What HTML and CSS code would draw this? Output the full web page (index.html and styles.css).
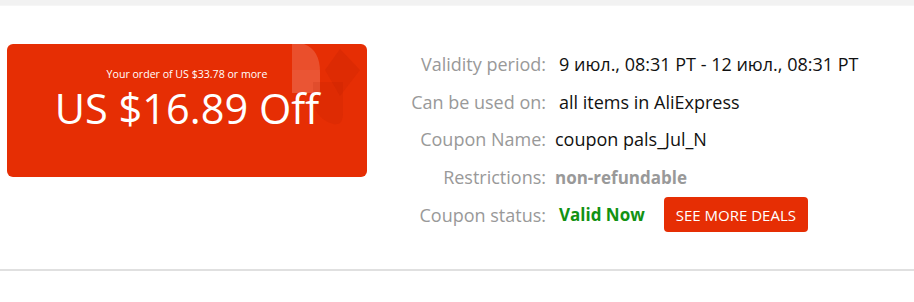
FILE: index.html
```html
<!DOCTYPE html>
<html lang="en">
<head>
<meta charset="utf-8">
<link rel="stylesheet" href="styles.css">
</head>
<body>
<div class="topbar"></div>
<section class="coupon-section">
  <div class="coupon-card">
    <svg class="card-deco" width="360" height="133" viewBox="0 0 360 133" aria-hidden="true">
      <path d="M285 0 H297 Q313 6 313 28 V49 H285 Z" fill="#ffffff" fill-opacity="0.16"/>
      <path d="M285 26 H313 V49 H285 Z" fill="#ffffff" fill-opacity="0.04"/>
      <path d="M333 5 L318 26 L353 26 Z" fill="#a81800" fill-opacity="0.16"/>
      <path d="M318 26 H353 L333 52 Z" fill="#a81800" fill-opacity="0.12"/>
      <path d="M306 38 H336 V70 Q336 82 326 80 Q306 74 306 52 Z" fill="#a81800" fill-opacity="0.12"/>
    </svg>
    <div class="card-cond">Your order of US $33.78 or more</div>
    <div class="card-amount">US $16.89 Off</div>
  </div>
  <div class="info">
    <div class="label">Validity period:</div>
    <div class="value">9 июл., 08:31 PT - 12 июл., 08:31 PT</div>
    <div class="label">Can be used on:</div>
    <div class="value">all items in AliExpress</div>
    <div class="label">Coupon Name:</div>
    <div class="value tight">coupon pals_Jul_N</div>
    <div class="label">Restrictions:</div>
    <div class="value muted-bold tight">non-refundable</div>
    <div class="label">Coupon status:</div>
    <div class="value status"><span class="valid">Valid Now</span><a class="deals-btn" href="#">SEE MORE DEALS</a></div>
  </div>
</section>
<div class="bottom-rule"></div>
</body>
</html>
```
FILE: styles.css
```css
* { box-sizing: border-box; }
body {
  margin: 0;
  background: #fff;
  font-family: "Open Sans", "Liberation Sans", sans-serif;
}
.topbar {
  height: 6px;
  background: #f2f2f2;
  border-bottom: 1px solid #f6f6f6;
}
.coupon-section {
  display: flex;
  align-items: flex-start;
  padding: 38px 0 0 7px;
  height: 263px;
}
.coupon-card {
  position: relative;
  width: 360px;
  height: 133px;
  border-radius: 6px;
  background: #e62e04;
  color: #fff;
  overflow: hidden;
  display: flex;
  flex-direction: column;
  align-items: center;
  padding-top: 24px;
}
.card-deco {
  position: absolute;
  left: 0;
  top: 0;
}
.card-cond {
  position: relative;
  font-size: 10.6px;
  line-height: 12px;
}
.card-amount {
  position: relative;
  font-size: 41.5px;
  line-height: 57px;
}
.info {
  display: grid;
  grid-template-columns: 140px auto;
  grid-auto-rows: 37.75px;
  column-gap: 13px;
  margin-left: 39px;
  margin-top: 1px;
  font-size: 18px;
  align-items: center;
}
.label {
  color: #999;
  text-align: right;
  white-space: nowrap;
}
.value {
  color: #111;
  white-space: nowrap;
}
.tight {
  margin-left: -4px;
}
.muted-bold {
  color: #999;
  font-weight: 700;
  font-size: 17px;
}
.status {
  display: flex;
  align-items: center;
}
.valid {
  color: #129212;
  font-weight: 700;
  font-size: 17px;
}
.deals-btn {
  margin-left: 19px;
  height: 35px;
  padding: 0 12px;
  border-radius: 4px;
  background: #e62e04;
  color: #fff;
  font-size: 15px;
  text-decoration: none;
  display: flex;
  align-items: center;
}
.bottom-rule {
  height: 2px;
  background: #e0e0e0;
}
```
